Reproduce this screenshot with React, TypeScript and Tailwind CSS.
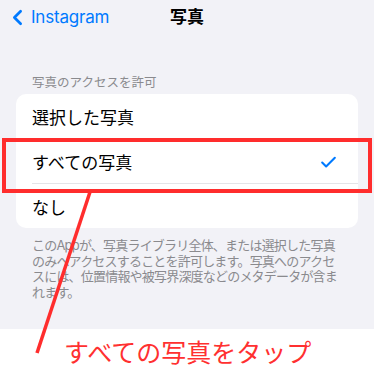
import { Check, ChevronLeft } from 'lucide-react'

const OPTIONS = ['選択した写真', 'すべての写真', 'なし']

export default function App() {
  return (
    <div className="relative w-[374px] h-[381px] overflow-hidden bg-white font-['Inter','Noto_Sans_CJK_JP',sans-serif]">
      {/* Settings screen */}
      <div className="h-[329px] bg-[#f2f2f7]">
        <header className="relative h-[35px] flex items-center">
          <div className="flex items-center text-[#007aff] pl-[5px]">
            <ChevronLeft size={25} strokeWidth={2.6} />
            <span className="text-[17px] ml-[1px] tracking-[-0.2px]">Instagram</span>
          </div>
          <h1 className="absolute left-0 right-0 text-center text-[17px] font-bold text-black pointer-events-none">写真</h1>
        </header>

        <p className="pl-8 pt-[40px] text-[12.5px] leading-[16px] text-[#8a8a8e]">写真のアクセスを許可</p>

        <div className="mx-4 mt-[3px] bg-white rounded-[10px] overflow-hidden">
          {OPTIONS.map((label, i) => (
            <div key={label}>
              {i > 0 && <div className="ml-4 h-px bg-[#e4e4e8]" />}
              <div className="h-[44px] flex items-center justify-between pl-4 pr-[20px] pt-[5px]">
                <span className="text-[17px] text-black">{label}</span>
                {i === 1 && <Check size={19} strokeWidth={2.6} className="text-[#007aff] -mt-[2px]" />}
              </div>
            </div>
          ))}
        </div>

        <p className="px-8 pt-[10px] text-[13px] leading-[15.7px] tracking-[-0.8px] text-[#8a8a8e]">
          このAppが、写真ライブラリ全体、または選択した写真のみへアクセスすることを許可します。写真へのアクセスには、位置情報や被写界深度などのメタデータが含まれます。
        </p>
      </div>

      {/* Caption */}
      <div className="pl-[64px] pt-[8px] text-[25px] leading-[32px] text-[#ff3030]">すべての写真をタップ</div>

      {/* Annotation overlay */}
      <div className="absolute left-[2px] top-[138px] w-[370px] h-[55px] border-[4px] border-[#ff2d2d]" />
      <svg className="absolute inset-0 pointer-events-none" width={374} height={381}>
        <line x1={90} y1={192} x2={37} y2={353} stroke="#ff2d2d" strokeWidth={3.5} />
      </svg>
    </div>
  )
}
